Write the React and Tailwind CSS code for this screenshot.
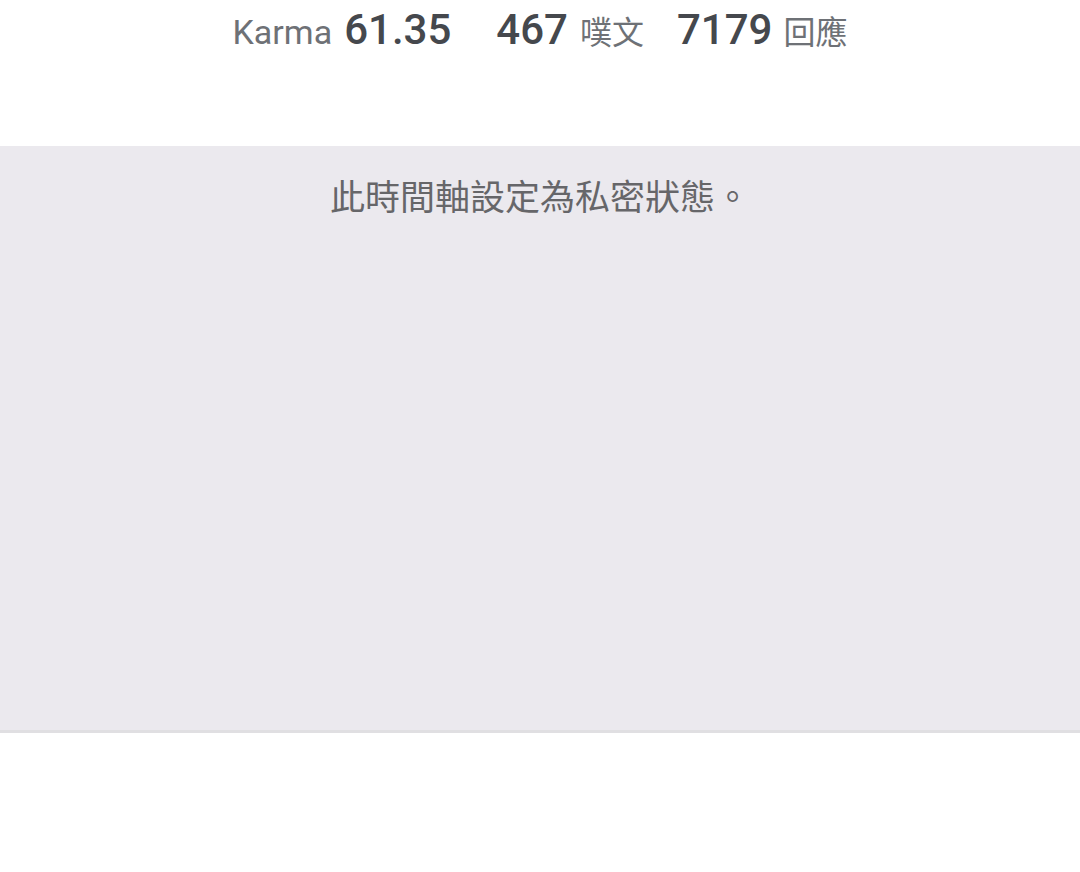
import React from "react";

const FONT = {
  fontFamily: "Roboto, 'Noto Sans CJK TC', sans-serif",
};

export default function App() {
  return (
    <div className="min-h-screen bg-white" style={FONT}>
      {/* Stats */}
      <div className="h-[146px] flex justify-center">
        <div className="flex items-baseline h-[60px] -mt-[2px]">
          <span className="text-[34px] text-[#6e7176]">Karma</span>
          <span className="ml-[12px] text-[42px] font-medium text-[#45484d]">
            61.35
          </span>
          <span className="ml-[45px] text-[42px] font-medium text-[#45484d]">
            467
          </span>
          <span className="ml-[12px] text-[32px] text-[#6e7176]">噗文</span>
          <span className="ml-[33px] text-[42px] font-medium text-[#45484d]">
            7179
          </span>
          <span className="ml-[11px] text-[32px] text-[#6e7176]">回應</span>
        </div>
      </div>

      {/* Private timeline */}
      <div className="h-[587px] bg-[#ebe9ee] border-b-[3px] border-[#e0dfe2] flex justify-center pt-[28px]">
        <p className="text-[35px] text-[#666669] leading-[50px]">
          此時間軸設定為私密狀態。
        </p>
      </div>
    </div>
  );
}
